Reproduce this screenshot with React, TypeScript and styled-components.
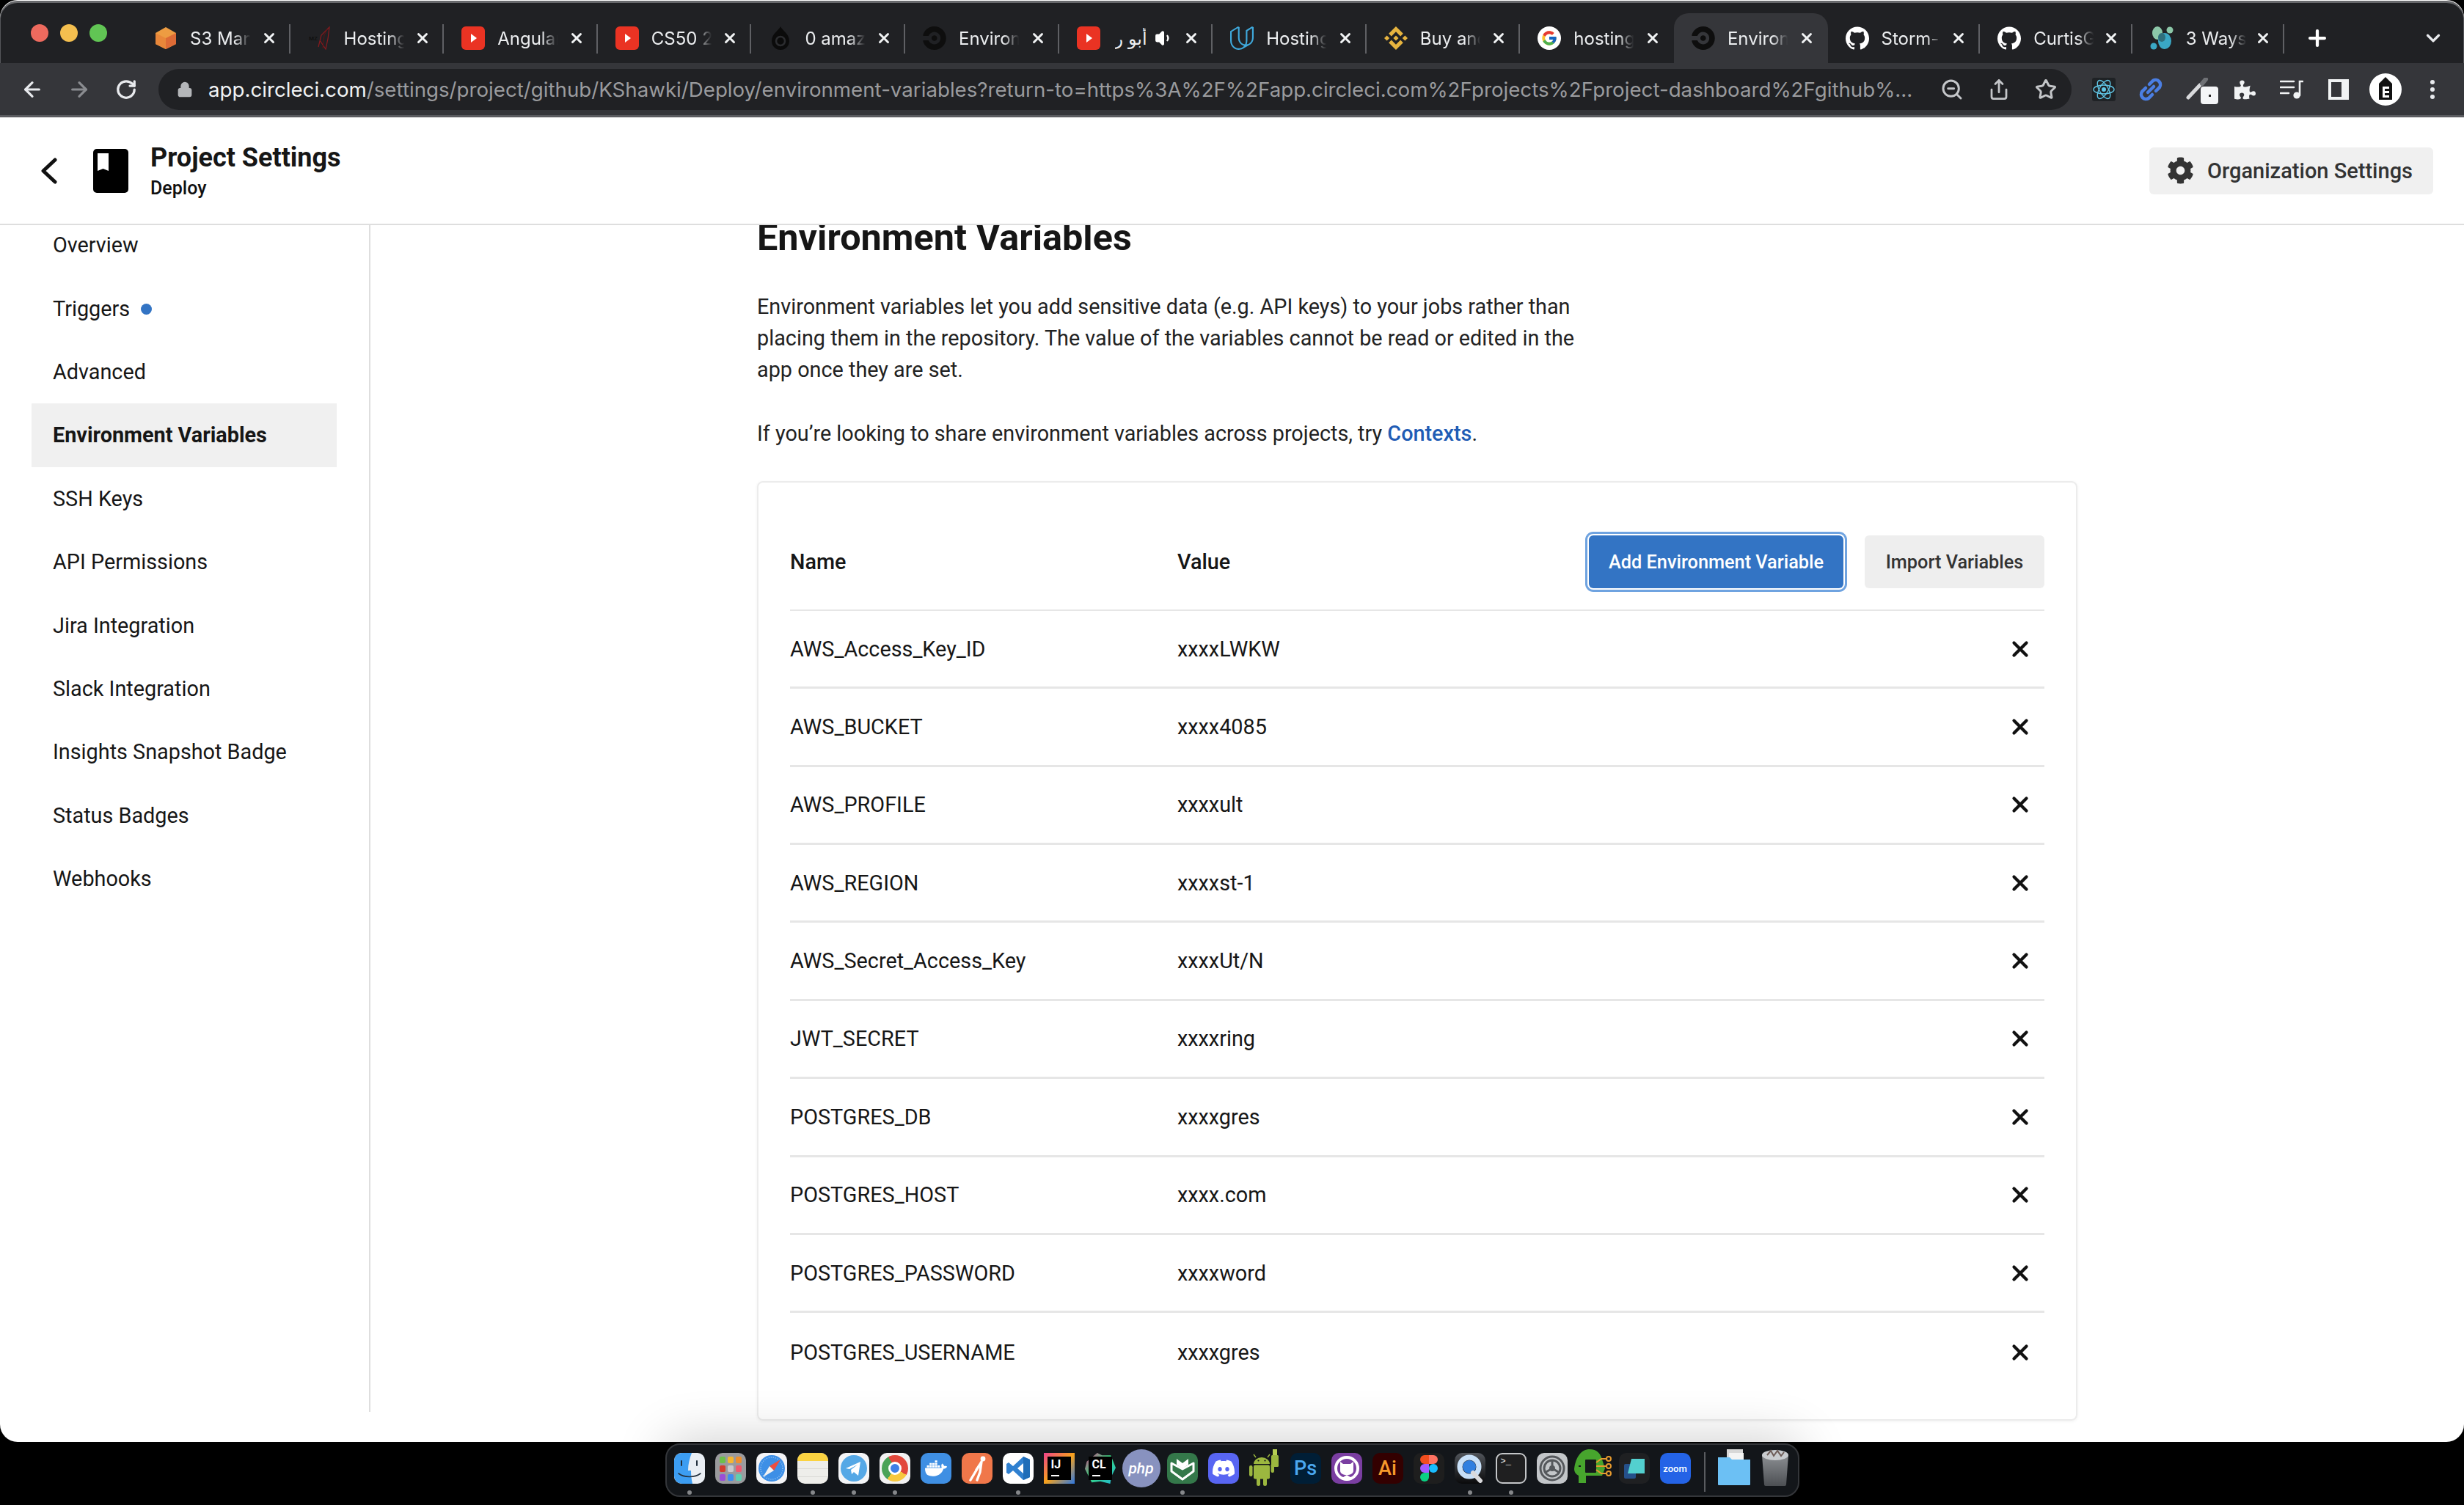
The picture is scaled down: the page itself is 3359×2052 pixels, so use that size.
import * as React from 'react';
import styled, { createGlobalStyle } from 'styled-components';
import {
  ArrowLeft,
  ArrowRight,
  ChevronDown,
  Lock,
  Plus,
  RotateCw,
  Share,
  Star,
  Volume1,
  X,
  ZoomOut,
} from 'lucide-react';
import { FaCog, FaPuzzlePiece } from 'react-icons/fa';
import {
  SiBinance,
  SiCircleci,
  SiDiscord,
  SiDocker,
  SiGithub,
  SiUdacity,
} from 'react-icons/si';

const uiFont = `Roboto, "Noto Sans", sans-serif`;
const chromeFont = `Inter, "DejaVu Sans", "Noto Sans", sans-serif`;

const GlobalStyle = createGlobalStyle`
  html, body {
    margin: 0;
    width: 3359px;
    height: 2052px;
    overflow: hidden;
    background: #000;
    font-family: ${uiFont};
  }
  * {
    box-sizing: border-box;
  }
`;

/* favicons */

const Youtube = () => (
  <svg width="32" height="32" viewBox="0 0 32 32">
    <rect width="32" height="32" rx="6" fill="#ea3323" />
    <path d="M13 10l8 6-8 6z" fill="#fff" />
  </svg>
);

const S3Cube = () => (
  <svg width="32" height="32" viewBox="0 0 32 32">
    <path d="M16 1l14 8v15l-14 7-14-7V9z" fill="#ed9c42" />
    <path d="M16 16l14-7v15l-14 7z" fill="#dd6b36" />
    <path d="M16 16L2 9v15l14 7z" fill="#e8873a" />
  </svg>
);

const MzLogo = () => (
  <svg width="32" height="32" viewBox="0 0 32 32" fill="none">
    <path d="M14 28L18 12 29 1l-2 16-3 14-8-12" stroke="#8a1a1e" strokeWidth="1.2" />
    <path d="M20 30l2-18 4-8" stroke="#5f1114" strokeWidth="1" />
    <text x="1" y="19" fontSize="8" fontWeight="700" fill="#111" fontFamily="Roboto, sans-serif">
      MZ
    </text>
  </svg>
);

const DarkDrop = () => (
  <svg width="32" height="32" viewBox="0 0 32 32" fill="none">
    <path d="M16 0c2 5 12 10 12 20a12 12 0 0 1-24 0C4 10 14 5 16 0z" fill="#0b0b0b" />
    <circle cx="16" cy="20" r="6" stroke="#2b2c2f" strokeWidth="2.5" />
  </svg>
);

const GoogleG = () => (
  <svg width="32" height="32" viewBox="0 0 48 48">
    <circle cx="24" cy="24" r="24" fill="#fff" />
    <g transform="translate(6.6 6.6) scale(.725)">
      <path
        d="M43.6 20.5H42V20H24v8h11.3C33.7 32.7 29.2 36 24 36c-6.6 0-12-5.4-12-12s5.4-12 12-12c3.1 0 5.8 1.2 8 3l5.7-5.7C34 6.1 29.3 4 24 4 13 4 4 13 4 24s9 20 20 20 20-9 20-20c0-1.3-.1-2.4-.4-3.5z"
        fill="#fbc02d"
      />
      <path
        d="M6.3 14.7l6.6 4.8C14.7 15.1 19 12 24 12c3.1 0 5.8 1.2 8 3l5.7-5.7C34 6.1 29.3 4 24 4 16.3 4 9.7 8.3 6.3 14.7z"
        fill="#e53935"
      />
      <path
        d="M24 44c5.2 0 9.9-2 13.4-5.2l-6.2-5.2C29.2 35.1 26.7 36 24 36c-5.2 0-9.6-3.3-11.3-8l-6.5 5C9.5 39.6 16.2 44 24 44z"
        fill="#4caf50"
      />
      <path
        d="M43.6 20.5H42V20H24v8h11.3c-.8 2.2-2.2 4.2-4.1 5.6l6.2 5.2C37 39.2 44 34 44 24c0-1.3-.1-2.4-.4-3.5z"
        fill="#1565c0"
      />
    </g>
  </svg>
);

const WaysLogo = () => (
  <svg width="32" height="32" viewBox="0 0 32 32">
    <ellipse cx="10" cy="9" rx="7" ry="9" fill="#8cc7a8" />
    <circle cx="27" cy="5" r="4.5" fill="#8cc7a8" />
    <ellipse cx="20" cy="20" rx="9" ry="11" fill="#3aa7c4" />
    <circle cx="5" cy="27" r="4.5" fill="#3aa7c4" />
    <ellipse cx="16" cy="15" rx="5" ry="6" fill="#2f6f7c" />
  </svg>
);

/* dock pictures */

const FinderFace = () => (
  <svg width="42" height="42" viewBox="0 0 42 42" fill="none">
    <path d="M0 10a10 10 0 0 1 10-10h14c-3 8-5 15-5 24h4c0 6 .6 12 2 18H10A10 10 0 0 1 0 32z" fill="#3c9df2" />
    <path d="M10 11v6M31 11v6" stroke="#23303e" strokeWidth="2" strokeLinecap="round" />
    <path d="M6 28c8 6 22 6 30 0" stroke="#23303e" strokeWidth="1.6" strokeLinecap="round" />
  </svg>
);

const launchpadColors = [
  '#6cc04a', '#f5b731', '#ee8f2f',
  '#d43c2f', '#c9c9cc', '#ef5a6f',
  '#9a4fd6', '#3d8ef0', '#5ed0b0',
];

const SafariCompass = () => (
  <svg width="38" height="38" viewBox="0 0 38 38">
    <circle cx="19" cy="19" r="18" fill="#3d8fe6" />
    <circle cx="19" cy="19" r="15" fill="none" stroke="#9cc7f2" strokeWidth="1.5" strokeDasharray="1 2" />
    <path d="M31 7L16 16l6 6z" fill="#ef4d3f" />
    <path d="M7 31l15-9-6-6z" fill="#f2f2f2" />
  </svg>
);

const TelegramPlane = () => (
  <svg width="36" height="36" viewBox="0 0 36 36">
    <circle cx="18" cy="18" r="18" fill="#55a8e6" />
    <path d="M7 18l20-9-3 19-6-5-3 3-1-6 9-7-11 6z" fill="#fff" />
  </svg>
);

const DockPostman = () => (
  <svg width="30" height="36" viewBox="0 0 30 36" fill="none" stroke="#fff" strokeLinecap="round">
    <circle cx="23" cy="5" r="3.4" fill="#fff" stroke="none" />
    <path d="M21 9L12 24l-6 10M21 9l-2 14-4 11M14 20l6-9" strokeWidth="3.4" />
  </svg>
);

const VsCodeMark = () => (
  <svg width="34" height="34" viewBox="0 0 34 34">
    <path d="M24 1l9 4v24l-9 4-14-13-6 5-3-2V11l3-2 6 5zM24 10l-8 7 8 7z" fill="#2f80d0" />
    <path d="M24 1l9 4v24l-9 4z" fill="#1f6db8" />
  </svg>
);

const IdeFrame = () => (
  <svg width="42" height="42" viewBox="0 0 42 42">
    <defs>
      <linearGradient id="ijFrame" x1="0" y1="0" x2="1" y2="1">
        <stop offset="0" stopColor="#f0418c" />
        <stop offset=".5" stopColor="#f7a21b" />
        <stop offset="1" stopColor="#2c78e4" />
      </linearGradient>
    </defs>
    <rect width="42" height="42" fill="url(#ijFrame)" />
  </svg>
);

const ClionFrame = () => (
  <svg width="50" height="50" viewBox="0 0 50 50">
    <defs>
      <linearGradient id="clFrame" x1="0" y1="0" x2="1" y2="1">
        <stop offset="0" stopColor="#e9388f" />
        <stop offset=".45" stopColor="#36d67e" />
        <stop offset="1" stopColor="#22b8d8" />
      </linearGradient>
    </defs>
    <path d="M20 0l8 4 14 0 8 20-7 14-2 12-16-4-14 2-11-22 3-12z" fill="url(#clFrame)" />
  </svg>
);

const BookShield = () => (
  <svg width="34" height="34" viewBox="0 0 34 34" fill="none" stroke="#fff" strokeLinejoin="round">
    <path d="M2 10l15 8 15-8v11L17 32 2 21z" strokeWidth="3" />
    <path d="M9 4l8 6 8-6v8l-8 5-8-5z" fill="#fff" stroke="none" />
  </svg>
);

const AndroidUsb = () => (
  <svg width="42" height="50" viewBox="0 0 42 50" fill="#9cb73f">
    <path d="M6 20a11 9 0 0 1 22 0z" />
    <rect x="6" y="21.5" width="22" height="19" rx="2" />
    <rect x="0" y="22" width="4.5" height="15" rx="2.2" />
    <rect x="29.5" y="20" width="4.5" height="12" rx="2.2" />
    <rect x="10" y="38" width="5" height="12" rx="2.5" />
    <rect x="19" y="38" width="5" height="12" rx="2.5" />
    <rect x="30" y="8" width="10" height="16" rx="1.5" />
    <rect x="32" y="0" width="6" height="8" fill="#b7cf53" />
    <path d="M9 11L6 7M25 11l3-4" stroke="#9cb73f" strokeWidth="1.4" fill="none" />
    <circle cx="12.5" cy="15.5" r="1.1" fill="#13161a" />
    <circle cx="21.5" cy="15.5" r="1.1" fill="#13161a" />
  </svg>
);

const GithubDesktop = () => (
  <svg width="36" height="36" viewBox="0 0 36 36">
    <circle cx="18" cy="18" r="15" fill="none" stroke="#fff" strokeWidth="4" />
    <path d="M9 9l4 3h10l4-3v12c0 4-4 6-9 6s-9-2-9-6z" fill="#fff" />
    <path d="M10 32l8-5 8 5-8 3z" fill="#fff" />
  </svg>
);

const FigmaMark = () => (
  <svg width="26" height="36" viewBox="0 0 26 36">
    <path d="M7 0h6v12H7a6 6 0 0 1 0-12z" fill="#f24e1e" />
    <path d="M13 0h6a6 6 0 0 1 0 12h-6z" fill="#ff7262" />
    <path d="M7 12h6v12H7a6 6 0 0 1 0-12z" fill="#a259ff" />
    <circle cx="19" cy="18" r="6" fill="#1abcfe" />
    <path d="M7 24h6v6a6 6 0 1 1-6-6z" fill="#0acf83" />
  </svg>
);

const QuickTimeMark = () => (
  <svg width="36" height="40" viewBox="0 0 36 40" fill="none">
    <circle cx="17" cy="18" r="13" stroke="#c8e0f8" strokeWidth="7" />
    <circle cx="17" cy="18" r="9" fill="#2f7fe0" />
    <path d="M22 26l10 11" stroke="#d9d9dc" strokeWidth="6" strokeLinecap="round" />
  </svg>
);

const SystemGear = () => (
  <svg width="36" height="36" viewBox="0 0 36 36" fill="none" stroke="#55585c">
    <circle cx="18" cy="18" r="16" strokeWidth="3" />
    <circle cx="18" cy="18" r="11" strokeWidth="3" />
    <circle cx="18" cy="18" r="4" fill="#55585c" stroke="none" />
    <path d="M18 18V7M18 18l10 6M18 18L8 24" strokeWidth="3" />
  </svg>
);

const CircuitHead = () => (
  <svg width="52" height="46" viewBox="0 0 52 46">
    <path d="M0 27C2 10 10 0 21 0c10 0 15 6 17 14l4 12-4 10H16v10H6V36c-4-2-6-5-6-9z" fill="#47a52d" />
    <rect x="15" y="14" width="15" height="18" rx="1" fill="#15181b" />
    <rect x="6" y="22" width="3" height="2" fill="#15181b" />
    <g fill="none" stroke="#e69a2e" strokeWidth="2">
      <path d="M30 18l7-5h7M30 23h14M30 28l7 5h7" />
      <circle cx="47" cy="13" r="3" />
      <circle cx="47" cy="23" r="3" />
      <circle cx="47" cy="33" r="3" />
    </g>
  </svg>
);

const SlabsMark = () => (
  <svg width="30" height="28" viewBox="0 0 30 28">
    <rect x="1" y="8" width="16" height="20" rx="2" fill="#25508a" />
    <path d="M11 1h18v20H6z" fill="#53d0cf" />
  </svg>
);

const FolderMark = () => (
  <svg width="46" height="50" viewBox="0 0 46 50">
    <rect x="13" y="0" width="22" height="22" fill="#d8d8d8" />
    <rect x="16" y="5" width="20" height="20" fill="#f4f4f4" />
    <path d="M1 11h16l3 3h25v34a1 1 0 0 1-1 1H2a1 1 0 0 1-1-1z" fill="#6cc0f4" />
  </svg>
);

const TrashMark = () => (
  <svg width="38" height="50" viewBox="0 0 38 50">
    <defs>
      <linearGradient id="binGrey" x1="0" y1="0" x2="0" y2="1">
        <stop offset="0" stopColor="#8b8e92" />
        <stop offset="1" stopColor="#4c4f53" />
      </linearGradient>
    </defs>
    <path d="M1 8h36l-3 40a2 2 0 0 1-2 2H6a2 2 0 0 1-2-2z" fill="url(#binGrey)" />
    <ellipse cx="19" cy="8" rx="18" ry="7" fill="#c9ccd0" />
    <path d="M8 8l5-6 4 7 5-7 5 7 4-5" fill="none" stroke="#6d5c58" strokeWidth="2" />
  </svg>
);

/* tabs */

const GithubFavicon = () => <SiGithub size={32} color="#fff" />;
const CircleFavicon = () => <SiCircleci size={32} color="#0e0e0e" />;

const tabs = [
  { title: 'S3 Man', icon: <S3Cube /> },
  { title: 'Hosting', icon: <MzLogo /> },
  { title: 'Angular', icon: <Youtube /> },
  { title: 'CS50 2', icon: <Youtube /> },
  { title: '0 amaz', icon: <DarkDrop /> },
  { title: 'Environ', icon: <CircleFavicon /> },
  { title: 'أبو ر', icon: <Youtube />, audio: true },
  { title: 'Hosting', icon: <SiUdacity size={32} color="#3fa9dc" /> },
  { title: 'Buy and', icon: <SiBinance size={32} color="#e7b43f" /> },
  { title: 'hosting', icon: <GoogleG />, noSeparator: true },
  { title: 'Environ', icon: <CircleFavicon />, active: true, noSeparator: true },
  { title: 'Storm-', icon: <GithubFavicon />, narrow: true },
  { title: 'CurtisG', icon: <GithubFavicon />, narrow: true },
  { title: '3 Ways', icon: <WaysLogo />, narrow: true },
];

const settingsLinks = [
  'Overview',
  'Triggers',
  'Advanced',
  'Environment Variables',
  'SSH Keys',
  'API Permissions',
  'Jira Integration',
  'Slack Integration',
  'Insights Snapshot Badge',
  'Status Badges',
  'Webhooks',
];

const variables = [
  ['AWS_Access_Key_ID', 'xxxxLWKW'],
  ['AWS_BUCKET', 'xxxx4085'],
  ['AWS_PROFILE', 'xxxxult'],
  ['AWS_REGION', 'xxxxst-1'],
  ['AWS_Secret_Access_Key', 'xxxxUt/N'],
  ['JWT_SECRET', 'xxxxring'],
  ['POSTGRES_DB', 'xxxxgres'],
  ['POSTGRES_HOST', 'xxxx.com'],
  ['POSTGRES_PASSWORD', 'xxxxword'],
  ['POSTGRES_USERNAME', 'xxxxgres'],
];

const App: React.FC = () => {
  return (
    <>
      <GlobalStyle />
      <BrowserWindow>
        <TabStrip>
          <TrafficLights>
            <TrafficLight $color="#ed6a5e" />
            <TrafficLight $color="#f4bf4f" />
            <TrafficLight $color="#61c554" />
          </TrafficLights>
          {tabs.map((tab, i) => (
            <Tab key={i} $active={tab.active} $noSeparator={tab.noSeparator} $narrow={tab.narrow}>
              <Favicon>{tab.icon}</Favicon>
              <TabTitle $audio={tab.audio}>{tab.title}</TabTitle>
              {tab.audio && (
                <AudioIcon>
                  <Volume1 size={26} color="#fff" fill="#fff" />
                </AudioIcon>
              )}
              <TabClose>
                <X size={22} strokeWidth={3.2} color="#f1f3f4" />
              </TabClose>
            </Tab>
          ))}
          <NewTabButton>
            <Plus size={34} strokeWidth={3} color="#fff" />
          </NewTabButton>
          <TabListButton>
            <ChevronDown size={30} strokeWidth={2.6} color="#e8eaed" />
          </TabListButton>
        </TabStrip>

        <Toolbar>
          <NavButton>
            <ArrowLeft size={32} strokeWidth={2.4} color="#e8eaed" />
          </NavButton>
          <NavButton>
            <ArrowRight size={32} strokeWidth={2.4} color="#8a8c90" />
          </NavButton>
          <NavButton>
            <RotateCw size={30} strokeWidth={2.6} color="#e8eaed" />
          </NavButton>
          <UrlBar>
            <LockIcon>
              <Lock size={22} strokeWidth={2.4} color="#b4b6b9" fill="#b4b6b9" />
            </LockIcon>
            <UrlText>
              <UrlHost>app.circleci.com</UrlHost>
              /settings/project/github/KShawki/Deploy/environment-variables?return-to=https%3A%2F%2Fapp.circleci.com%2Fprojects%2Fproject-dashboard%2Fgithub%...
            </UrlText>
            <UrlAction>
              <ZoomOut size={32} strokeWidth={2.2} color="#c4c6c9" />
            </UrlAction>
            <UrlAction>
              <Share size={30} strokeWidth={2.2} color="#c4c6c9" />
            </UrlAction>
            <UrlAction>
              <Star size={30} strokeWidth={2.4} color="#c4c6c9" />
            </UrlAction>
          </UrlBar>
          <Extensions>
            <ExtensionSlot>
              <svg width="32" height="32" viewBox="0 0 32 32" fill="none" stroke="#61c8e8" strokeWidth="1.4">
                <rect width="32" height="32" rx="3" fill="#1f2225" stroke="none" />
                <ellipse cx="16" cy="16" rx="14" ry="6" />
                <ellipse cx="16" cy="16" rx="14" ry="6" transform="rotate(60 16 16)" />
                <ellipse cx="16" cy="16" rx="14" ry="6" transform="rotate(120 16 16)" />
                <circle cx="16" cy="16" r="3" fill="#61c8e8" stroke="none" />
              </svg>
            </ExtensionSlot>
            <ExtensionSlot>
              <svg width="34" height="34" viewBox="0 0 34 34" fill="none" stroke="#4b7fe3" strokeWidth="4.5" strokeLinecap="round">
                <path d="M15 10l5-5a6.5 6.5 0 0 1 9 9l-5 5" />
                <path d="M19 24l-5 5a6.5 6.5 0 0 1-9-9l5-5" />
                <path d="M13 21l8-8" />
              </svg>
            </ExtensionSlot>
            <ExtensionSlot>
              <svg width="32" height="32" viewBox="0 0 32 32" fill="none" strokeLinecap="round">
                <path d="M3 27L19 10" stroke="#d9dadc" strokeWidth="5" />
                <path d="M22 8l5-6" stroke="#6f7175" strokeWidth="6" />
              </svg>
              <ExtensionBadge>
                <BadgeDot />
              </ExtensionBadge>
            </ExtensionSlot>
            <ExtensionSlot>
              <FaPuzzlePiece size={29} color="#f1f3f4" />
            </ExtensionSlot>
            <ExtensionSlot>
              <svg width="32" height="28" viewBox="0 0 32 28" fill="none" stroke="#f1f3f4" strokeWidth="2.6" strokeLinecap="round">
                <path d="M1 3h18M1 11h18M1 19h11" />
                <path d="M27 22V3h4" />
                <circle cx="23" cy="22" r="4.6" fill="#f1f3f4" stroke="none" />
              </svg>
            </ExtensionSlot>
            <ExtensionSlot>
              <PanelIcon />
            </ExtensionSlot>
            <ExtensionSlot>
              <Avatar>
                <svg width="20" height="34" viewBox="0 0 20 34">
                  <path d="M10 0l9 9v22H1V9z" fill="#111" />
                  <path d="M6 13h9v3H9v3h6v3H9v3h6v3H6z" fill="#fff" />
                </svg>
              </Avatar>
            </ExtensionSlot>
            <ExtensionSlot>
              <MenuDots>
                <MenuDot />
                <MenuDot />
                <MenuDot />
              </MenuDots>
            </ExtensionSlot>
          </Extensions>
        </Toolbar>

        <PageHeader>
          <BackLink>
            <svg width="24" height="36" viewBox="0 0 24 36" fill="none" stroke="#111" strokeWidth="5" strokeLinecap="round" strokeLinejoin="round">
              <path d="M20 3L4 18l16 15" />
            </svg>
          </BackLink>
          <ProjectBook>
            <svg width="48" height="60" viewBox="0 0 48 60">
              <rect width="48" height="60" rx="5" fill="#000" />
              <path d="M6 6h15v24l-7.5-3L6 30z" fill="#fff" />
            </svg>
          </ProjectBook>
          <HeaderTitles>
            <PageTitle>Project Settings</PageTitle>
            <PageSubtitle>Deploy</PageSubtitle>
          </HeaderTitles>
          <OrgButton>
            <FaCog size={37} color="#333" />
            Organization Settings
          </OrgButton>
        </PageHeader>

        <PageBody>
          <Sidebar>
            {settingsLinks.map(link => (
              <SideLink key={link} $active={link === 'Environment Variables'}>
                {link}
                {link === 'Triggers' && <NewDot />}
              </SideLink>
            ))}
          </Sidebar>
          <Main>
            <Heading>Environment Variables</Heading>
            <Lead>
              Environment variables let you add sensitive data (e.g. API keys) to your jobs rather than
              placing them in the repository. The value of the variables cannot be read or edited in the
              app once they are set.
            </Lead>
            <ShareNote>
              If you’re looking to share environment variables across projects, try{' '}
              <ContextLink>Contexts</ContextLink>.
            </ShareNote>
            <Card>
              <TableHead>
                <NameHeader>Name</NameHeader>
                <ValueHeader>Value</ValueHeader>
                <PrimaryButton>Add Environment Variable</PrimaryButton>
                <SecondaryButton>Import Variables</SecondaryButton>
              </TableHead>
              {variables.map(([name, value]) => (
                <VariableRow key={name}>
                  <VariableName>{name}</VariableName>
                  <VariableValue>{value}</VariableValue>
                  <DeleteIcon>
                    <X size={34} strokeWidth={3} color="#111" />
                  </DeleteIcon>
                </VariableRow>
              ))}
            </Card>
          </Main>
        </PageBody>
      </BrowserWindow>

      <DockRow>
        <Dock>
          <DockSlot $running>
            <Tile $bg="#e9eef4"><FinderFace /></Tile>
          </DockSlot>
          <DockSlot>
            <Tile $bg="#9a9b9e">
              <LaunchGrid>
                {launchpadColors.map(c => (
                  <LaunchCell key={c} $color={c} />
                ))}
              </LaunchGrid>
            </Tile>
          </DockSlot>
          <DockSlot>
            <Tile $bg="#f4f4f6"><SafariCompass /></Tile>
          </DockSlot>
          <DockSlot $running>
            <NotesTile>
              <NotesBand />
            </NotesTile>
          </DockSlot>
          <DockSlot $running>
            <Tile $bg="#f4f5f7"><TelegramPlane /></Tile>
          </DockSlot>
          <DockSlot $running>
            <Tile $bg="#f2f2f2"><ChromeBall><ChromeEye /></ChromeBall></Tile>
          </DockSlot>
          <DockSlot>
            <Tile $bg="#3f8fe3"><SiDocker size={30} color="#fff" /></Tile>
          </DockSlot>
          <DockSlot>
            <Tile $bg="#f0774a"><DockPostman /></Tile>
          </DockSlot>
          <DockSlot $running>
            <Tile $bg="#fff"><VsCodeMark /></Tile>
          </DockSlot>
          <DockSlot>
            <LogoFrame>
              <IdeFrame />
              <IdeScreen>
                IJ
                <IdeCursor />
              </IdeScreen>
            </LogoFrame>
          </DockSlot>
          <DockSlot>
            <LogoFrame>
              <ClionFrame />
              <IdeScreen>
                CL
                <IdeCursor />
              </IdeScreen>
            </LogoFrame>
          </DockSlot>
          <DockSlot>
            <PhpBadge>php</PhpBadge>
          </DockSlot>
          <DockSlot $running>
            <Tile $bg="#34784a"><BookShield /></Tile>
          </DockSlot>
          <DockSlot>
            <Tile $bg="#5865f2"><SiDiscord size={30} color="#fff" /></Tile>
          </DockSlot>
          <DockSlot>
            <AndroidUsb />
          </DockSlot>
          <DockSlot>
            <Tile $bg="#001e36" $color="#4aa8f0">Ps</Tile>
          </DockSlot>
          <DockSlot>
            <Tile $bg="#7a3ea1"><GithubDesktop /></Tile>
          </DockSlot>
          <DockSlot>
            <Tile $bg="#300" $color="#f79a2b">Ai</Tile>
          </DockSlot>
          <DockSlot>
            <Tile $bg="#1e1e1e"><FigmaMark /></Tile>
          </DockSlot>
          <DockSlot $running>
            <Tile $bg="linear-gradient(#50545a, #0a0a0b)"><QuickTimeMark /></Tile>
          </DockSlot>
          <DockSlot $running>
            <TerminalTile>
              <TerminalPrompt>&gt;_</TerminalPrompt>
            </TerminalTile>
          </DockSlot>
          <DockSlot>
            <Tile $bg="#c3c6c9"><SystemGear /></Tile>
          </DockSlot>
          <DockSlot>
            <CircuitHead />
          </DockSlot>
          <DockSlot>
            <Tile $bg="#1f2022"><SlabsMark /></Tile>
          </DockSlot>
          <DockSlot>
            <ZoomTile>zoom</ZoomTile>
          </DockSlot>
          <DockDivider />
          <DockSlot>
            <FolderMark />
          </DockSlot>
          <DockSlot>
            <TrashMark />
          </DockSlot>
        </Dock>
      </DockRow>
    </>
  );
};

const BrowserWindow = styled.div`
  display: flex;
  flex-direction: column;
  width: 3359px;
  height: 1966px;
  background: #fff;
  border-radius: 24px;
  overflow: hidden;
`;

const TabStrip = styled.div`
  display: flex;
  flex: none;
  height: 85px;
  margin-top: 1px;
  padding: 14px 26px 0 0;
  background: #202124;
  border-top: 3px solid #68696c;
  border-left: 1px solid #55565a;
  border-right: 1px solid #55565a;
  border-top-left-radius: 24px;
  border-top-right-radius: 24px;
`;

const TrafficLights = styled.div`
  display: flex;
  flex: none;
  gap: 16px;
  width: 185px;
  padding: 18px 0 0 41px;
  margin-top: -3px;
`;

const TrafficLight = styled.span<{ $color: string }>`
  width: 24px;
  height: 24px;
  border-radius: 50%;
  background: ${p => p.$color};
`;

const Tab = styled.div<{ $active?: boolean; $noSeparator?: boolean; $narrow?: boolean }>`
  position: relative;
  display: flex;
  flex: none;
  align-items: center;
  width: ${p => (p.$narrow ? '207.6px' : '209.6px')};
  height: 68px;
  padding: 0 18px 0 24px;
  border-radius: 20px 20px 0 0;
  background: ${p => (p.$active ? '#35363a' : 'transparent')};

  &::after {
    content: '';
    display: ${p => (p.$noSeparator ? 'none' : 'block')};
    position: absolute;
    right: 0;
    top: 15px;
    height: 40px;
    width: 2px;
    background: #5f6064;
  }
`;

const Favicon = styled.span`
  display: flex;
  flex: none;
  width: 32px;
  height: 32px;
`;

const TabTitle = styled.span<{ $audio?: boolean }>`
  flex: none;
  width: ${p => (p.$audio ? '42px' : '84px')};
  margin-left: ${p => (p.$audio ? '20px' : '17px')};
  overflow: hidden;
  white-space: nowrap;
  font-family: ${chromeFont};
  font-size: 24px;
  color: #eceef0;
  -webkit-mask-image: ${p => (p.$audio ? 'none' : 'linear-gradient(to right, #000 72%, transparent 98%)')};
  mask-image: ${p => (p.$audio ? 'none' : 'linear-gradient(to right, #000 72%, transparent 98%)')};
`;

const AudioIcon = styled.span`
  display: flex;
  margin-left: 12px;
`;

const TabClose = styled.span`
  display: flex;
  margin-left: auto;
`;

const NewTabButton = styled.span`
  display: flex;
  flex: none;
  justify-content: center;
  width: 90px;
  height: 68px;
  align-items: center;
`;

const TabListButton = styled.span`
  display: flex;
  align-items: center;
  height: 68px;
  margin-left: auto;
`;

const Toolbar = styled.div`
  display: flex;
  flex: none;
  align-items: flex-start;
  height: 74px;
  padding: 8px 11px 0 12px;
  background: #35363a;
  border-bottom: 3px solid #5b5c60;
`;

const NavButton = styled.span`
  display: flex;
  flex: none;
  align-items: center;
  justify-content: center;
  width: 64px;
  height: 56px;
`;

const UrlBar = styled.div`
  display: flex;
  flex: 1;
  align-items: center;
  height: 56px;
  margin: 0 12px;
  padding: 0 3px 0 25px;
  border-radius: 28px;
  background: #202124;
`;

const LockIcon = styled.span`
  display: flex;
  flex: none;
  width: 43px;
`;

const UrlText = styled.span`
  flex: 1;
  overflow: hidden;
  white-space: nowrap;
  font-family: ${chromeFont};
  font-size: 27.7px;
  color: #9a9b9e;
`;

const UrlHost = styled.span`
  color: #f1f3f4;
`;

const UrlAction = styled.span`
  display: flex;
  flex: none;
  align-items: center;
  justify-content: center;
  width: 64px;
`;

const Extensions = styled.div`
  display: flex;
  flex: none;
`;

const ExtensionSlot = styled.span`
  position: relative;
  display: flex;
  flex: none;
  align-items: center;
  justify-content: center;
  width: 64px;
  height: 56px;
`;

const ExtensionBadge = styled.span`
  position: absolute;
  left: 36px;
  top: 24px;
  display: flex;
  align-items: center;
  justify-content: center;
  width: 24px;
  height: 24px;
  border-radius: 4px;
  background: #f4f5f7;
`;

const BadgeDot = styled.span`
  width: 3px;
  height: 3px;
  background: #222;
`;

const PanelIcon = styled.span`
  width: 28px;
  height: 28px;
  border: 4px solid #f1f3f4;
  border-right-width: 10px;
`;

const Avatar = styled.span`
  display: flex;
  align-items: center;
  justify-content: center;
  width: 44px;
  height: 44px;
  border-radius: 50%;
  background: #fff;
`;

const MenuDots = styled.span`
  display: flex;
  flex-direction: column;
  gap: 4px;
`;

const MenuDot = styled.span`
  width: 6px;
  height: 6px;
  border-radius: 50%;
  background: #e8eaed;
`;

const PageHeader = styled.header`
  display: flex;
  flex: none;
  align-items: center;
  height: 147px;
  padding: 0 42px 0 55px;
  border-bottom: 2px solid #dedede;
`;

const BackLink = styled.span`
  display: flex;
  flex: none;
  width: 72px;
`;

const ProjectBook = styled.span`
  display: flex;
  flex: none;
  width: 78px;
`;

const HeaderTitles = styled.div`
  display: flex;
  flex-direction: column;
  gap: 6px;
`;

const PageTitle = styled.div`
  font-size: 36px;
  line-height: 42px;
  font-weight: 700;
  color: #161616;
`;

const PageSubtitle = styled.div`
  font-size: 25px;
  line-height: 30px;
  font-weight: 500;
  color: #111;
`;

const OrgButton = styled.button`
  display: flex;
  align-items: center;
  gap: 18px;
  height: 64px;
  margin-left: auto;
  padding: 0 28px 0 24px;
  border: 0;
  border-radius: 6px;
  background: #f0f0f0;
  font-family: ${uiFont};
  font-size: 29px;
  font-weight: 500;
  color: #333;
`;

const PageBody = styled.div`
  display: flex;
  flex: 1;
  min-height: 0;
`;

const Sidebar = styled.nav`
  flex: none;
  width: 505px;
  height: 1618px;
  overflow: hidden;
  padding: 0 44px 0 43px;
  border-right: 2px solid #dedede;
`;

const SideLink = styled.div<{ $active?: boolean }>`
  display: flex;
  align-items: center;
  height: 86.4px;
  padding-left: 29px;
  font-size: 28.8px;
  font-weight: ${p => (p.$active ? 700 : 400)};
  color: #161616;
  background: ${p => (p.$active ? '#f0f0f0' : 'transparent')};

  &:first-child {
    margin-top: -16px;
  }
`;

const NewDot = styled.span`
  width: 15px;
  height: 15px;
  margin: 2px 0 0 15px;
  border-radius: 50%;
  background: #3374c4;
`;

const Main = styled.main`
  flex: 1;
  min-width: 0;
  padding-left: 527px;
  overflow: hidden;
`;

const Heading = styled.h1`
  margin: -8px 0 0;
  font-size: 50.4px;
  line-height: 50px;
  font-weight: 700;
  color: #161616;
`;

const Lead = styled.p`
  width: 1130px;
  margin: 48px 0 0;
  font-size: 28.8px;
  line-height: 43.2px;
  color: #222;
`;

const ShareNote = styled(Lead)`
  width: 1300px;
  margin-top: 43px;
`;

const ContextLink = styled.span`
  font-weight: 500;
  color: #1f5cb5;
`;

const Card = styled.section`
  display: flex;
  flex-direction: column;
  width: 1800px;
  height: 1281px;
  margin-top: 43px;
  padding: 0 43px;
  border: 2px solid #ececec;
  border-radius: 8px;
  box-shadow: 0 1px 4px rgba(0, 0, 0, 0.06);
`;

const TableHead = styled.div`
  display: flex;
  flex: none;
  align-items: center;
  height: 175px;
  padding-top: 44px;
  border-bottom: 2px solid #e6e6e6;
`;

const NameHeader = styled.span`
  flex: none;
  width: 528px;
  font-size: 28.8px;
  font-weight: 500;
  color: #161616;
`;

const ValueHeader = styled(NameHeader)`
  flex: 1;
  width: auto;
`;

const PrimaryButton = styled.button`
  flex: none;
  width: 347px;
  height: 72px;
  margin-right: 29px;
  border: 0;
  border-radius: 6px;
  background: #3374c4;
  box-shadow: 0 0 0 2px #fff, 0 0 0 5px #6fa3e0;
  font-family: ${uiFont};
  font-size: 25.3px;
  font-weight: 500;
  color: #fff;
`;

const SecondaryButton = styled.button`
  flex: none;
  width: 245px;
  height: 72px;
  border: 0;
  border-radius: 6px;
  background: #eee;
  font-family: ${uiFont};
  font-size: 25.3px;
  font-weight: 500;
  color: #333;
`;

const VariableRow = styled.div`
  display: flex;
  flex: none;
  align-items: center;
  height: 106.4px;
  border-bottom: 3px solid #e6e6e6;

  &:last-child {
    border-bottom: 0;
  }
`;

const VariableName = styled.span`
  flex: none;
  width: 528px;
  font-size: 28.8px;
  color: #161616;
`;

const VariableValue = styled.span`
  flex: 1;
  font-size: 28.8px;
  color: #161616;
`;

const DeleteIcon = styled.span`
  display: flex;
  flex: none;
  margin-right: 16px;
`;

const DockRow = styled.div`
  display: flex;
  justify-content: center;
  height: 86px;
  padding-top: 2px;
  background: #000;
`;

const Dock = styled.div`
  position: relative;
  z-index: 2;
  display: flex;
  width: 1546px;
  height: 73px;
  padding-left: 3px;
  border: 2px solid #34363a;
  border-radius: 20px;
  background: #13161a;
  box-shadow: 0 -4px 70px rgba(0, 0, 0, 0.2);
`;

const DockSlot = styled.div<{ $running?: boolean }>`
  position: relative;
  display: flex;
  flex: none;
  align-items: flex-start;
  justify-content: center;
  width: 56px;
  height: 69px;
  padding-top: 11px;

  &::after {
    content: '';
    display: ${p => (p.$running ? 'block' : 'none')};
    position: absolute;
    left: 25px;
    bottom: 1px;
    width: 6px;
    height: 6px;
    border-radius: 50%;
    background: #85878a;
  }

  & > svg {
    flex: none;
    margin-top: -5px;
  }
`;

const Tile = styled.div<{ $bg: string; $color?: string }>`
  display: flex;
  flex: none;
  align-items: center;
  justify-content: center;
  overflow: hidden;
  width: 42px;
  height: 42px;
  border-radius: 10px;
  background: ${p => p.$bg};
  font-size: 27px;
  font-weight: 500;
  color: ${p => p.$color || '#fff'};
`;

const LaunchGrid = styled.div`
  display: grid;
  grid-template-columns: repeat(3, 8px);
  gap: 3px;
`;

const LaunchCell = styled.span<{ $color: string }>`
  height: 9px;
  border-radius: 2px;
  background: ${p => p.$color};
`;

const NotesTile = styled.div`
  flex: none;
  overflow: hidden;
  width: 42px;
  height: 42px;
  border-radius: 10px;
  background: repeating-linear-gradient(#eeeeea 0 10px, #d9d9d5 10px 11px);
`;

const NotesBand = styled.div`
  height: 11px;
  background: #fbd341;
`;

const ChromeBall = styled.div`
  display: flex;
  align-items: center;
  justify-content: center;
  width: 36px;
  height: 36px;
  border-radius: 50%;
  background: conic-gradient(#e2483c 0 120deg, #f7c83f 120deg 215deg, #4aa357 215deg 330deg, #e2483c 330deg);
`;

const ChromeEye = styled.div`
  width: 18px;
  height: 18px;
  border: 3px solid #fff;
  border-radius: 50%;
  background: #3f7fe6;
`;

const LogoFrame = styled.div`
  position: relative;
  flex: none;
  display: flex;
  align-items: center;
  justify-content: center;
  width: 42px;
  height: 42px;
`;

const IdeScreen = styled.div`
  position: absolute;
  left: 5px;
  top: 5px;
  width: 32px;
  height: 32px;
  padding: 3px 0 0 5px;
  background: #000;
  font-size: 16px;
  line-height: 16px;
  font-weight: 700;
  color: #fff;
`;

const IdeCursor = styled.div`
  width: 11px;
  height: 2px;
  margin-top: 6px;
  background: #fff;
`;

const PhpBadge = styled.div`
  display: flex;
  flex: none;
  align-items: center;
  justify-content: center;
  width: 52px;
  height: 52px;
  margin-top: -5px;
  border-radius: 50%;
  background: #8892bf;
  font-size: 21px;
  font-style: italic;
  font-weight: 500;
  color: #fff;
`;

const TerminalTile = styled.div`
  flex: none;
  width: 42px;
  height: 42px;
  padding: 3px 5px;
  border: 2px solid #c4c6c8;
  border-radius: 9px;
  background: #1f1f20;
`;

const TerminalPrompt = styled.div`
  font-family: "Liberation Mono", monospace;
  font-size: 12px;
  line-height: 14px;
  color: #f2f2f2;
`;

const ZoomTile = styled.div`
  display: flex;
  flex: none;
  align-items: center;
  justify-content: center;
  width: 42px;
  height: 42px;
  border-radius: 10px;
  background: #2463e6;
  font-size: 13px;
  font-weight: 500;
  color: #fff;
`;

const DockDivider = styled.div`
  flex: none;
  width: 2px;
  height: 54px;
  margin: 10px 11px 0;
  background: #5a5c60;
`;

export default App;
